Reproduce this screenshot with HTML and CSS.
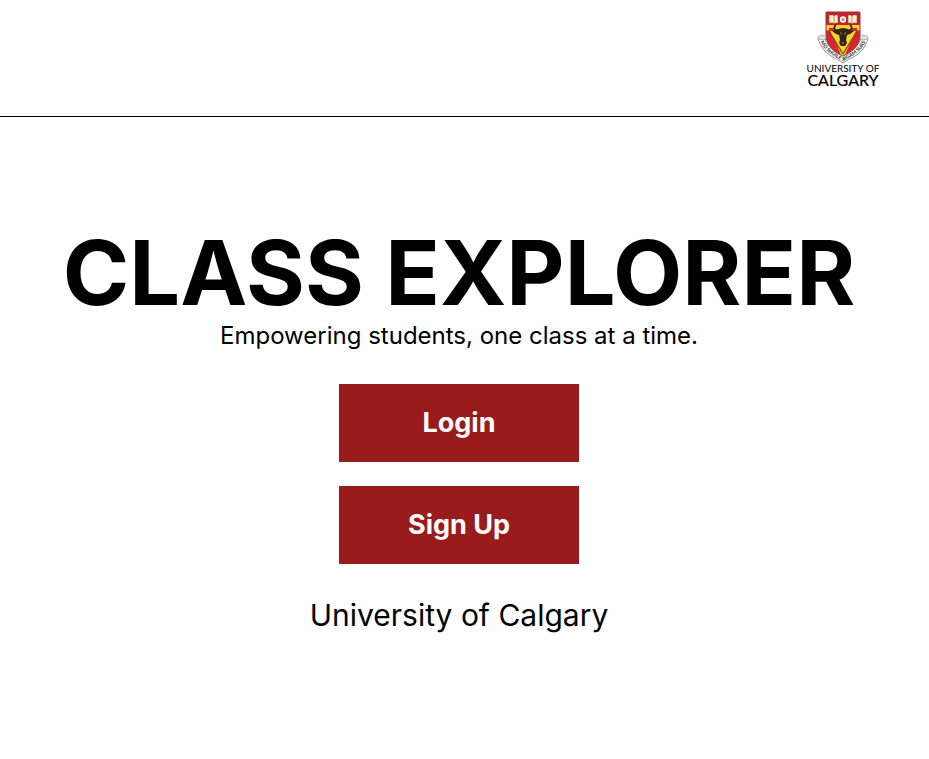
FILE: index.html
```html
<!DOCTYPE html>
<html lang="en">
<head>
<meta charset="utf-8">
<meta name="viewport" content="width=device-width, initial-scale=1">
<title>Class Explorer</title>
<link rel="stylesheet" href="styles.css">
</head>
<body>
<header class="header">
  <svg class="logo" viewBox="0 0 76 80" role="img" aria-label="University of Calgary">
    <defs>
      <clipPath id="shield"><path d="M21 2H55V24C55 37 46 42 38 46C30 42 21 37 21 24Z"/></clipPath>
      <path id="motto" d="M14.500 29C19 42 29 46 38 51.500C47 46 57 42 61.500 29"/>
    </defs>
    <!-- motto ribbon -->
    <path d="M16 27C20 41 29 43.500 38 49C47 43.500 56 41 60 27" fill="none" stroke="#8c8c8c" stroke-width="7.500"/>
    <path d="M16 27C20 41 29 43.500 38 49C47 43.500 56 41 60 27" fill="none" stroke="#f3f3f3" stroke-width="6"/>
    <path d="M13 29l1-3 5-1 3 2-3 3zM63 29l-1-3-5-1-3 2 3 3z" fill="#e4e4e4" stroke="#8c8c8c" stroke-width=".6"/>
    <!-- shield -->
    <g clip-path="url(#shield)">
      <path fill="#ffd21f" d="M20 1h36v48H20z"/>
      <path fill="#c9202f" d="M21 2h34v14H21z"/>
      <path fill="#f7d52b" d="M21 15h34v2H21z"/>
      <path fill="#dc2430" d="M21 20l4 1 3 7 3 5 5 12-15-9zM55 20l-4 1-3 7-3 5-5 12 15-9z"/>
      <path fill="#dc2430" d="M24 18h5v3h-5zM47 18h5v3h-5z"/>
    </g>
    <path d="M21 2H55V24C55 37 46 42 38 46C30 42 21 37 21 24Z" fill="none" stroke="#8b3a30"/>
    <!-- open books and rose -->
    <path fill="#fff0c8" stroke="#8b5240" stroke-width=".6" d="M24 5h4l1 1 1-1h3v8h-3l-1 1-1-1h-4zM43 5h3l1 1 1-1h4v8h-4l-1 1-1-1h-3z"/>
    <path stroke="#9a6847" stroke-width=".7" d="M29 6v7M47 6v7"/>
    <circle cx="38" cy="9.500" r="3.200" fill="#fff"/>
    <circle cx="38" cy="9.500" r="1.500" fill="#c98180"/>
    <!-- bull's head between crossed staves -->
    <path d="M24 21L38 44M52 21L38 44" stroke="#6b4c1e" stroke-width="1.300"/>
    <path d="M31 15C28 17 29 21 34 21M45 15C48 17 47 21 42 21" fill="none" stroke="#2b2118" stroke-width="1.600"/>
    <path fill="#30241b" d="M33 19l5-1 5 1 6 2-4 3-3 1-1 5 1 3-2 3h-4l-2-3 1-3-1-5-3-1-4-3z"/>
    <path fill="#a3753f" d="M35 22l2 1-1 2zM41 22l-2 1 1 2zM37 32h2v1.500h-2z"/>
    <text class="logo-motto"><textPath href="#motto" startOffset="50%">MO SHÙILE TOGAM SUAS</textPath></text>
    <text class="logo-small" x="38" y="62">UNIVERSITY OF</text>
    <text class="logo-large" x="38" y="76">CALGARY</text>
  </svg>
</header>
<main class="hero">
  <h1 class="title">CLASS EXPLORER</h1>
  <p class="tagline">Empowering students, one class at a time.</p>
  <div class="actions">
    <button class="action" type="button">Login</button>
    <button class="action" type="button">Sign Up</button>
  </div>
  <p class="school">University of Calgary</p>
</main>
</body>
</html>
```
FILE: styles.css
```css
* {
  box-sizing: border-box;
}

body {
  margin: 0;
  background: #fff;
  color: #000;
  font-family: Inter, "Liberation Sans", sans-serif;
}

.header {
  display: flex;
  justify-content: flex-end;
  padding: 10px 48px 26px;
  border-bottom: 1px solid #000;
}

.logo {
  display: block;
  width: 76px;
  height: 80px;
}

.logo text {
  fill: #000;
  font-family: Lato, sans-serif;
  text-anchor: middle;
}

.logo .logo-small {
  font-size: 10px;
}

.logo .logo-large {
  font-size: 16px;
  stroke: #000;
  stroke-width: 0.2px;
}

.logo .logo-motto {
  fill: #333;
  font-size: 5px;
  font-weight: 700;
}

.hero {
  display: flex;
  flex-direction: column;
  align-items: center;
  padding: 110px 11px 32px 0;
  text-align: center;
}

.title {
  margin: 0;
  font-size: 90px;
  font-weight: 700;
  line-height: 92px;
}

.tagline {
  margin: 0;
  font-size: 24px;
  line-height: 34px;
}

.actions {
  display: flex;
  flex-direction: column;
  gap: 24px;
  margin: 31px 0 32px;
}

.action {
  width: 240px;
  padding: 20px;
  border: 0;
  background: #991b1b;
  color: #fff;
  font: 700 27px/38px Inter, "Liberation Sans", sans-serif;
  cursor: pointer;
}

.school {
  margin: 0;
  font-size: 30px;
  line-height: 38px;
}
```
